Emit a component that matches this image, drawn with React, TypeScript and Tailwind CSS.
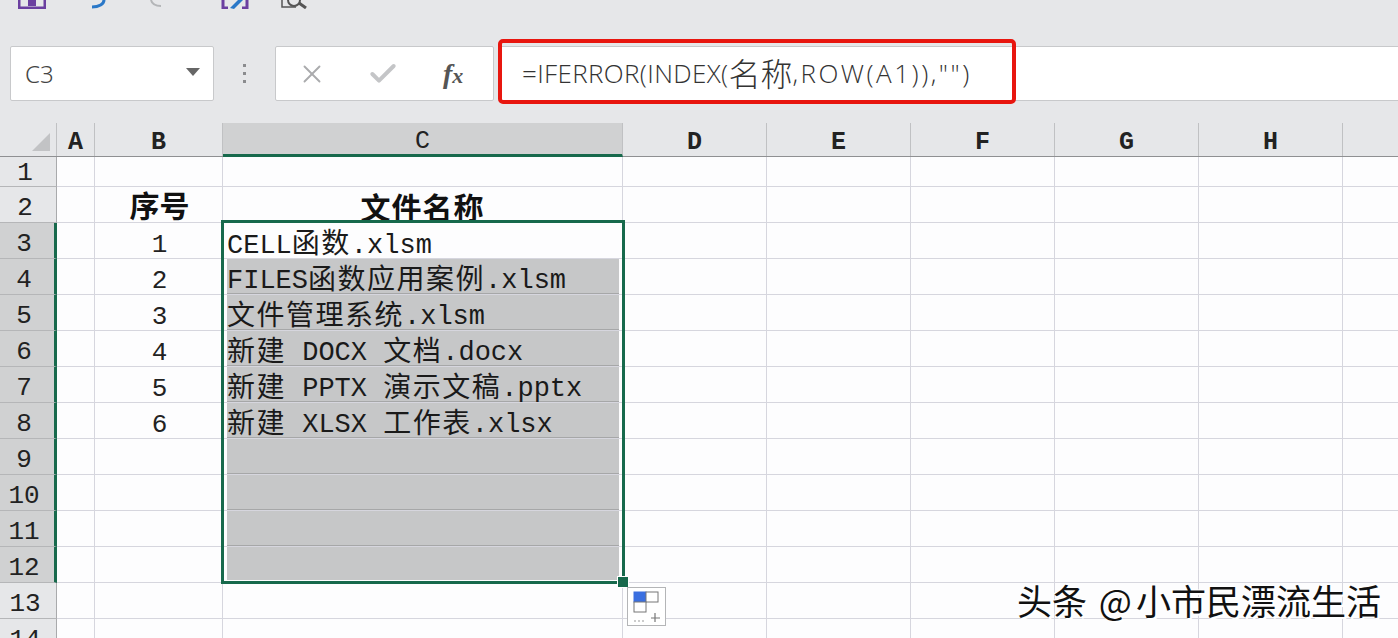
import { X, Check } from 'lucide-react'

const mono = "font-['Liberation_Mono','Noto_Sans_CJK_SC',monospace]"
const columns = [
  { name: 'A', width: 'w-[38px]' },
  { name: 'B', width: 'w-[128px]' },
  { name: 'C', width: 'w-[400px]' },
  { name: 'D', width: 'w-[144px]' },
  { name: 'E', width: 'w-[144px]' },
  { name: 'F', width: 'w-[144px]' },
  { name: 'G', width: 'w-[144px]' },
  { name: 'H', width: 'w-[144px]' },
  { name: '', width: 'w-[60px]' },
]

const files = [
  'CELL函数.xlsm',
  'FILES函数应用案例.xlsm',
  '文件管理系统.xlsm',
  '新建 DOCX 文档.docx',
  '新建 PPTX 演示文稿.pptx',
  '新建 XLSX 工作表.xlsx',
]

const rows = [1, 2, 3, 4, 5, 6, 7, 8, 9, 10, 11, 12, 13, 14]

function rowHeight(row: number) {
  if (row === 1) return 'h-[30px]'
  return 'h-[36px]'
}

function FileName({ text }: { text: string }) {
  const parts = text.split(/([\u4e00-\u9fff]+)/).filter(Boolean)
  return (
    <>
      {parts.map((part, i) =>
        /[\u4e00-\u9fff]/.test(part) ? (
          <span key={i} className="text-[28px] tracking-[1.5px]">
            {part}
          </span>
        ) : (
          <span key={i} className="text-[27px]">
            {part}
          </span>
        ),
      )}
    </>
  )
}

function QuickBar() {
  return (
    <div className="h-[9px] overflow-hidden flex items-end pl-[18px]">
      <svg width="28" height="9" viewBox="0 0 28 9" className="mr-[44px]">
        <path d="M1 0v8h26V0" fill="none" stroke="#6b3fa0" strokeWidth="3" />
        <rect x="10" y="0" width="8" height="6" fill="#6b3fa0" />
      </svg>
      <svg width="16" height="9" viewBox="0 0 16 9" className="mr-[44px]">
        <path d="M14 0c0 4-5 7-12 7" fill="none" stroke="#2a78c8" strokeWidth="3" />
      </svg>
      <svg width="12" height="9" viewBox="0 0 12 9" className="mr-[59px]">
        <path d="M1 0c1 4 5 6 10 6" fill="none" stroke="#b4b6b8" strokeWidth="2" />
      </svg>
      <svg width="28" height="9" viewBox="0 0 28 9" className="mr-[32px]">
        <path d="M2 0v8h5M26 0v8h-5" fill="none" stroke="#6b3fa0" strokeWidth="3" />
        <path d="M9 8l8-8h5l-9 9z" fill="#2a78c8" />
      </svg>
      <svg width="28" height="9" viewBox="0 0 28 9">
        <path d="M1 0v7h14" fill="none" stroke="#555" strokeWidth="1.5" />
        <circle cx="13" cy="0" r="6" fill="none" stroke="#555" strokeWidth="2" />
        <path d="M18 3l7 5" stroke="#555" strokeWidth="3" />
      </svg>
    </div>
  )
}

function FormulaBar() {
  return (
    <div className="relative h-[114px] pt-[37px] flex items-start">
      <div className="ml-[10px] w-[204px] h-[55px] bg-white border border-[#c8c9cb] rounded-[2px] flex items-center justify-between pl-[14px] pr-[13px] font-['Noto_Sans',sans-serif] font-light text-[24px] text-[#444]">
        <span>C3</span>
        <span className="w-0 h-0 border-l-[7px] border-r-[7px] border-t-[8px] border-l-transparent border-r-transparent border-t-[#666] mb-1" />
      </div>
      <div className="w-[61px] h-[55px] flex flex-col items-center justify-center gap-[5px]">
        <span className="w-[3px] h-[3px] bg-[#8b8c8e]" />
        <span className="w-[3px] h-[3px] bg-[#8b8c8e]" />
        <span className="w-[3px] h-[3px] bg-[#8b8c8e]" />
      </div>
      <div className="w-[219px] h-[55px] bg-white border border-[#c8c9cb] rounded-[2px] flex items-center pl-[21px]">
        <X size={30} strokeWidth={1.5} className="text-[#aaabad]" />
        <Check size={32} strokeWidth={3} className="text-[#c4c5c7] ml-[40px]" />
        <span className="ml-[44px] font-['Liberation_Serif',serif] italic font-bold text-[28px] text-[#555]">
          f<span className="text-[22px]">x</span>
        </span>
      </div>
      <div className="ml-[5px] flex-1 h-[55px] bg-white border-y border-[#c8c9cb] flex items-center pl-[23px] font-['Open_Sans','Noto_Sans_CJK_SC',sans-serif] font-light text-[26px] text-[#333] whitespace-nowrap">
        <span className="tracking-[0.35px]">=IFERROR(INDEX(</span>
        <span className="text-[32px] leading-none">名称</span>
        <span className="tracking-[2.5px]">,ROW(A1)),"")</span>
      </div>
      <div className="absolute left-[498px] top-[30px] w-[518px] h-[65px] border-[4px] border-[#e8160f] rounded-[5px]" />
    </div>
  )
}

function Sheet() {
  return (
    <div className={`relative ${mono} text-[#222]`}>
      <div className="flex h-[34px] bg-[#e6e7e9] border-b border-[#8f9092]">
        <div className="w-[57px] shrink-0 flex items-end justify-end pr-[6px] pb-[5px] border-r border-[#c0c1c3]">
          <span className="w-0 h-0 border-l-[18px] border-b-[18px] border-l-transparent border-b-[#c2c3c5]" />
        </div>
        {columns.map((col) => (
          <div
            key={col.name}
            className={`${col.width} shrink-0 flex items-center justify-center text-[25px] pt-[7px] border-r border-[#c0c1c3] ${
              col.name === 'C' ? 'bg-[#d0d1d2] border-b-[3px] border-b-[#17694c] h-[34px] pt-[5px]' : 'font-bold'
            }`}
          >
            {col.name}
          </div>
        ))}
      </div>
      {rows.map((row) => {
        const inSelection = row >= 3 && row <= 12
        const file = files[row - 3]
        const shaded = row >= 4 && row <= 12
        return (
          <div key={row} className={`flex ${rowHeight(row)}`}>
            <div
              className={`w-[57px] shrink-0 flex items-center justify-center text-[26px] pr-[6px] border-b border-[#b5b6b8] ${
                row === 1 ? 'pt-[3px]' : 'pt-[8px]'
              } ${inSelection ? 'bg-[#d0d1d2] border-r-[3px] border-r-[#17694c]' : 'bg-[#e6e7e9] border-r border-r-[#a9aaac]'}`}
            >
              {row}
            </div>
            <div className="w-[38px] shrink-0 border-r border-b border-[#d6d6de]" />
            <div className="w-[128px] shrink-0 border-r border-b border-[#d6d6de] flex items-center justify-center text-[26px] pt-[9px] pl-[2px]">
              {row === 2 ? <span className="font-bold text-[30px] -mt-[9px] text-[#111] font-['Noto_Sans_CJK_SC',sans-serif]">序号</span> : null}
              {inSelection && file ? row - 2 : null}
            </div>
            <div className="w-[400px] shrink-0 border-r border-b border-[#d6d6de] flex items-start justify-center overflow-visible">
              {row === 2 ? <span className="font-bold text-[30px] leading-[36px] text-[#111] font-['Noto_Sans_CJK_SC',sans-serif] tracking-[1px] pt-[1px]">文件名称</span> : null}
              {inSelection ? (
                <div
                  className={`ml-[4px] mr-[3px] flex-1 flex items-center pt-[11px] whitespace-pre text-[#1a1a1a] ${
                    row === 12 ? 'h-[33px]' : 'h-full'
                  } ${shaded ? 'bg-[#c6c7c8]' : ''} ${shaded && row !== 12 ? 'border-b border-[#a6a7a8]' : ''}`}
                >
                  {file ? <FileName text={file} /> : null}
                </div>
              ) : null}
            </div>
            {['D', 'E', 'F', 'G', 'H'].map((name) => (
              <div key={name} className="w-[144px] shrink-0 border-r border-b border-[#d6d6de]" />
            ))}
            <div className="w-[60px] shrink-0 border-b border-[#d6d6de]" />
          </div>
        )
      })}

      {/* selection box, fill handle and paste options sit over the grid */}
      <div className="absolute left-[221px] top-[97px] w-[404px] h-[364px] border-[3px] border-[#17694c]" />
      <div className="absolute left-[617px] top-[453px] w-[12px] h-[12px] bg-[#17694c] border border-white" />
      <div className="absolute left-[627px] top-[464px] w-[39px] h-[39px] bg-white border border-[#b4b5b7] flex items-center justify-center">
        <svg width="28" height="32" viewBox="0 0 28 32">
          <rect x="1" y="1" width="12" height="10" fill="#3a6fe0" stroke="#3a6fe0" />
          <rect x="13" y="1" width="12" height="10" fill="#fff" stroke="#777" />
          <rect x="1" y="11" width="12" height="10" fill="#fff" stroke="#777" />
          <path d="M1 30h12" stroke="#999" strokeDasharray="2 2" />
          <path d="M22 22v9M18 27h9" stroke="#777" strokeWidth="1.2" />
        </svg>
      </div>
      <div className="absolute left-[1017px] top-[455px] font-['Noto_Sans_CJK_SC',sans-serif] text-[35px] leading-[44px] text-[#111] whitespace-nowrap [text-shadow:1px_1px_0_#fff,-1px_-1px_0_#fff,2px_2px_0_#fff]">
        头条<span className="tracking-[4px]"> @</span>小市民漂流生活
      </div>
    </div>
  )
}

export default function App() {
  return (
    <div className="w-[1398px] h-[638px] overflow-hidden bg-[#e6e7e9]">
      <QuickBar />
      <FormulaBar />
      <div className="bg-[#fdfdfe]">
        <Sheet />
      </div>
    </div>
  )
}
